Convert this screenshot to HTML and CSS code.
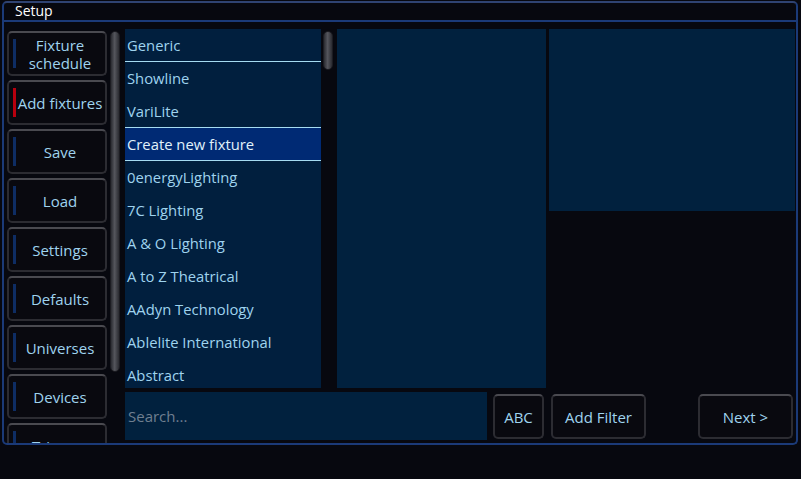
FILE: index.html
```html
<!DOCTYPE html>
<html>
<head>
<meta charset="utf-8">
<link rel="stylesheet" href="styles.css">
</head>
<body>
<div class="frame">
  <div class="title">Setup</div>
  <div class="body">
    <div class="leftcol">
      <div class="btn side"><span class="ind"></span>Fixture<br>schedule</div>
      <div class="btn side"><span class="ind red"></span>Add fixtures</div>
      <div class="btn side"><span class="ind"></span>Save</div>
      <div class="btn side"><span class="ind"></span>Load</div>
      <div class="btn side"><span class="ind"></span>Settings</div>
      <div class="btn side"><span class="ind"></span>Defaults</div>
      <div class="btn side"><span class="ind"></span>Universes</div>
      <div class="btn side"><span class="ind"></span>Devices</div>
      <div class="btn side"><span class="ind"></span>Triggers</div>
    </div>
    <div class="lscroll"></div>
    <div class="main">
      <div class="toprow">
        <div class="list">
          <div class="item bb">Generic</div>
          <div class="item">Showline</div>
          <div class="item bb">VariLite</div>
          <div class="item bb sel">Create new fixture</div>
          <div class="item">0energyLighting</div>
          <div class="item">7C Lighting</div>
          <div class="item">A &amp; O Lighting</div>
          <div class="item">A to Z Theatrical</div>
          <div class="item">AAdyn Technology</div>
          <div class="item">Ablelite International</div>
          <div class="item">Abstract</div>
        </div>
        <div class="track"><div class="thumb"></div></div>
        <div class="panel mid"></div>
        <div class="panel right"></div>
      </div>
      <div class="botrow">
        <div class="search">Search...</div>
        <div class="btn abc">ABC</div>
        <div class="btn filter">Add Filter</div>
        <div class="spacer"></div>
        <div class="btn next">Next &gt;</div>
      </div>
    </div>
  </div>
</div>
</body>
</html>
```
FILE: styles.css
```css
html, body {
  margin: 0;
  padding: 0;
  background: #07080f;
  width: 801px;
  height: 479px;
  overflow: hidden;
  font-family: "Open Sans", "Noto Sans", sans-serif;
}
.frame {
  margin: 1px 0 0 2px;
  width: 796px;
  height: 444px;
  box-sizing: border-box;
  border: 2px solid #1b3a78;
  border-top-color: #2f4372;
  border-radius: 5px;
  background: #07080f;
  overflow: hidden;
}
.title {
  height: 17px;
  border-bottom: 2px solid #1b3a78;
  color: #ffffff;
  font-size: 14px;
  line-height: 16px;
  padding-left: 11px;
}
.body {
  display: flex;
  padding: 7px 0 0 3px;
  height: 421px;
  box-sizing: border-box;
}
.leftcol {
  width: 100px;
  margin-top: 2px;
  display: flex;
  flex-direction: column;
  gap: 4px;
  overflow: hidden;
  flex-shrink: 0;
}
.btn {
  box-sizing: border-box;
  background: #09090f;
  border: 2px solid #2c2c32;
  border-top-color: #4a4a50;
  border-radius: 5px;
  color: #9fd3ee;
  font-size: 15px;
  line-height: 18px;
  display: flex;
  align-items: center;
  justify-content: center;
  text-align: center;
  position: relative;
  flex-shrink: 0;
}
.side {
  height: 45px;
  padding-left: 6px;
}
.ind {
  position: absolute;
  left: 4px;
  top: 6px;
  bottom: 6px;
  width: 3px;
  background: #0e2d64;
}
.ind.red { background: #b8000e; }
.lscroll {
  width: 10px;
  height: 341px;
  margin: 2px 0 0 3px;
  box-sizing: border-box;
  border-radius: 5px;
  border: 1px solid #1c1c22;
  background: linear-gradient(to right, #2a2b31, #55565d 45%, #2a2b31);
  flex-shrink: 0;
}
.main {
  margin-left: 5px;
  width: 670px;
  display: flex;
  flex-direction: column;
  gap: 4px;
}
.toprow {
  display: flex;
  height: 359px;
  align-items: flex-start;
}
.list {
  width: 196px;
  height: 359px;
  background: #011f3e;
  overflow: hidden;
}
.item {
  height: 33px;
  box-sizing: border-box;
  padding-left: 2px;
  color: #9fd3ee;
  font-size: 14.8px;
  line-height: 32px;
  white-space: nowrap;
}
.item.bb { border-bottom: 1px solid #a6dcf2; }
.item.sel {
  background: #002a74;
  color: #e0f2fb;
}
.track {
  width: 16px;
  height: 359px;
  box-sizing: border-box;
  padding: 2px 4px 0 2px;
}
.thumb {
  height: 37px;
  border-radius: 5px;
  border: 1px solid #1c1c22;
  background: linear-gradient(to right, #2a2b31, #55565d 45%, #2a2b31);
}
.panel { background: #01213e; }
.mid {
  width: 209px;
  height: 359px;
}
.right {
  width: 246px;
  height: 182px;
  margin-left: 3px;
}
.botrow {
  display: flex;
  align-items: flex-start;
  height: 48px;
}
.search {
  width: 362px;
  height: 48px;
  background: #01213e;
  color: #6f7f90;
  font-size: 15px;
  line-height: 48px;
  padding-left: 3px;
  box-sizing: border-box;
}
.abc, .filter, .next {
  height: 45px;
  margin-top: 2px;
}
.abc { width: 51px; margin-left: 6px; }
.filter { width: 95px; margin-left: 7px; }
.spacer { width: 52px; }
.next { width: 95px; }
```
